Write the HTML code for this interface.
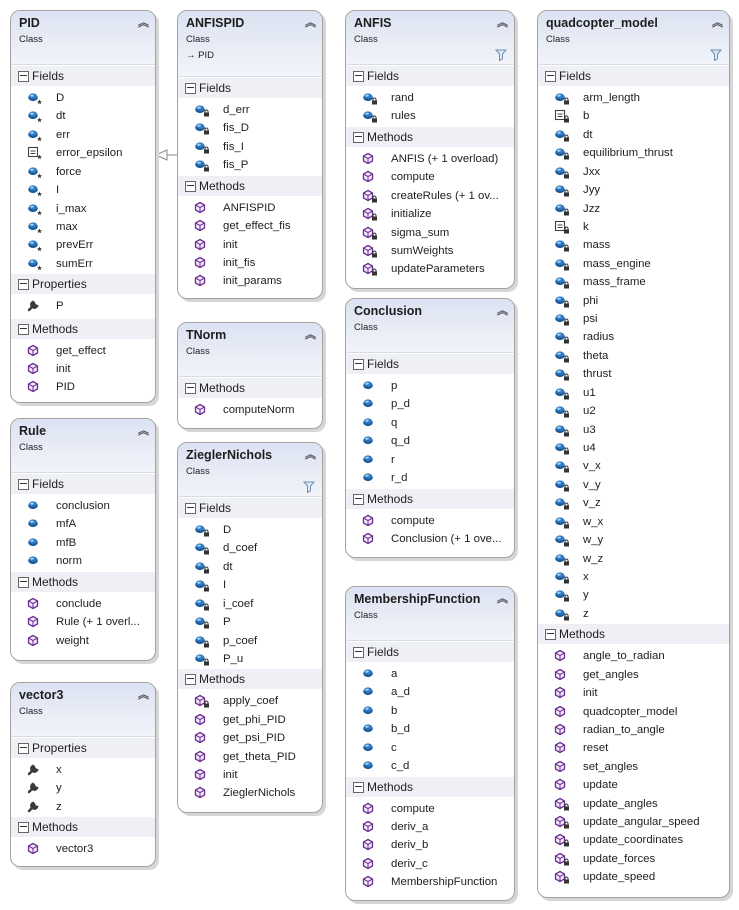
<!DOCTYPE html>
<html><head><meta charset="utf-8">
<style>
*{margin:0;padding:0;box-sizing:border-box}
body{width:739px;height:910px;background:#fff;position:relative;overflow:hidden;font-family:"Liberation Sans",sans-serif;color:#1e1e1e}
.b{position:absolute;border:1px solid #a3a3a3;border-radius:10px;background:#fff;box-shadow:3px 3px 0 #d6d6d6;overflow:hidden}
.h{height:54px;background:linear-gradient(#dbe2f1,#f2f4fa);border-bottom:1px solid #d8dce6;position:relative}
.h.t{height:66px}
.h b{position:absolute;left:8px;top:5px;font-size:12.5px}
.h s{position:absolute;left:8px;top:23px;font-size:9.5px;text-decoration:none}
.h u{position:absolute;left:8px;top:39px;font-size:9.5px;text-decoration:none}
.h .ch{position:absolute;right:8px;top:3px;font-size:11px;color:#555;font-weight:bold;letter-spacing:-2px}
.h .fi{position:absolute;right:7px;top:38px}
.sh{margin-top:1px;height:20px;background:#eef0f5;font-size:12px;line-height:20px;padding-left:21px;position:relative;margin-bottom:3px}
.sh:before{content:"";position:absolute;left:7px;top:5px;width:9px;height:9px;border:1px solid #666;background:#fff}
.sh:after{content:"";position:absolute;left:9px;top:9px;width:7px;height:1px;background:#333}
.r{height:18.43px;line-height:18.43px;font-size:11.4px;padding-left:45px;position:relative;white-space:nowrap}
.r svg{position:absolute;left:16px;top:2px;width:17px;height:15px}
</style></head><body>
<svg width="0" height="0" style="position:absolute">
<defs>
<g id="f"><ellipse cx="6" cy="6.5" rx="4.8" ry="3.6" fill="#1d5c98"/><ellipse cx="6" cy="5" rx="4" ry="2.6" fill="#2f7cc4"/><ellipse cx="5" cy="4.6" rx="1.8" ry="1" fill="#a9d2f2"/></g>
<g id="m"><polygon points="6,1.5 10.5,4 10.5,9 6,11.5 1.5,9 1.5,4" fill="#f4ecfa" stroke="#6b2c91" stroke-width="1.3"/><path d="M1.8,4.2 6,6.5 10.2,4.2 M6,6.5 V11" stroke="#6b2c91" stroke-width="1" fill="none"/></g>
<g id="c"><rect x="1.5" y="1.5" width="9" height="9" fill="#fff" stroke="#444" stroke-width="1.1"/><path d="M3.5,5 H8.5 M3.5,7.5 H8.5" stroke="#444" stroke-width="1.1"/></g>
<g id="l"><rect x="10" y="9.5" width="5" height="4" fill="#333"/><path d="M11,9.8 V8.5 a1.5,1.5 0 0 1 3,0 V9.8" stroke="#333" fill="none" stroke-width="1"/></g>
<g id="s"><path d="M12.5,8.5 13.2,10.3 15,10.3 13.6,11.4 14.1,13.2 12.5,12.1 10.9,13.2 11.4,11.4 10,10.3 11.8,10.3Z" fill="#333"/></g>
<g id="p"><path d="M2,11 L7,6 M6,3 a3,3 0 1 0 4,4 l-1.5,-0.5 -1,-1 -0.5,-1.5Z" stroke="#3a3a3a" stroke-width="2.4" fill="#3a3a3a" stroke-linecap="round"/></g>
<g id="fl"><path d="M1,1 H11 L7.5,5 V10 L4.5,11.5 V5Z" fill="#dfe8f3" stroke="#6f8fb0" stroke-width="1"/></g>
</defs></svg>

<!-- inheritance arrow -->
<svg style="position:absolute;left:150px;top:145px" width="30" height="20"><path d="M5,10 H27" stroke="#888" stroke-width="1"/><polygon points="6,10 17,5 17,15" fill="#fff" stroke="#888"/></svg>

<!-- PID -->
<div class="b" style="left:10px;top:10px;width:146px;height:393px">
<div class="h"><b>PID</b><s>Class</s><span class="ch">︽</span></div>
<div class="sh">Fields</div>
<div class="r"><svg><use href="#f"/><use href="#s"/></svg>D</div>
<div class="r"><svg><use href="#f"/><use href="#s"/></svg>dt</div>
<div class="r"><svg><use href="#f"/><use href="#s"/></svg>err</div>
<div class="r"><svg><use href="#c"/><use href="#s"/></svg>error_epsilon</div>
<div class="r"><svg><use href="#f"/><use href="#s"/></svg>force</div>
<div class="r"><svg><use href="#f"/><use href="#s"/></svg>I</div>
<div class="r"><svg><use href="#f"/><use href="#s"/></svg>i_max</div>
<div class="r"><svg><use href="#f"/><use href="#s"/></svg>max</div>
<div class="r"><svg><use href="#f"/><use href="#s"/></svg>prevErr</div>
<div class="r"><svg><use href="#f"/><use href="#s"/></svg>sumErr</div>
<div class="sh">Properties</div>
<div class="r"><svg><use href="#p"/></svg>P</div>
<div class="sh" style="margin-top:3px">Methods</div>
<div class="r"><svg><use href="#m"/></svg>get_effect</div>
<div class="r"><svg><use href="#m"/></svg>init</div>
<div class="r"><svg><use href="#m"/></svg>PID</div>
</div>

<!-- Rule -->
<div class="b" style="left:10px;top:418px;width:146px;height:243px">
<div class="h"><b>Rule</b><s>Class</s><span class="ch">︽</span></div>
<div class="sh">Fields</div>
<div class="r"><svg><use href="#f"/></svg>conclusion</div>
<div class="r"><svg><use href="#f"/></svg>mfA</div>
<div class="r"><svg><use href="#f"/></svg>mfB</div>
<div class="r"><svg><use href="#f"/></svg>norm</div>
<div class="sh">Methods</div>
<div class="r"><svg><use href="#m"/></svg>conclude</div>
<div class="r"><svg><use href="#m"/></svg>Rule (+ 1 overl...</div>
<div class="r"><svg><use href="#m"/></svg>weight</div>
</div>

<!-- vector3 -->
<div class="b" style="left:10px;top:682px;width:146px;height:185px">
<div class="h"><b>vector3</b><s>Class</s><span class="ch">︽</span></div>
<div class="sh">Properties</div>
<div class="r"><svg><use href="#p"/></svg>x</div>
<div class="r"><svg><use href="#p"/></svg>y</div>
<div class="r"><svg><use href="#p"/></svg>z</div>
<div class="sh">Methods</div>
<div class="r"><svg><use href="#m"/></svg>vector3</div>
</div>

<!-- ANFISPID -->
<div class="b" style="left:177px;top:10px;width:146px;height:289px">
<div class="h t"><b>ANFISPID</b><s>Class</s><u>→ PID</u><span class="ch">︽</span></div>
<div class="sh">Fields</div>
<div class="r"><svg><use href="#f"/><use href="#l"/></svg>d_err</div>
<div class="r"><svg><use href="#f"/><use href="#l"/></svg>fis_D</div>
<div class="r"><svg><use href="#f"/><use href="#l"/></svg>fis_I</div>
<div class="r"><svg><use href="#f"/><use href="#l"/></svg>fis_P</div>
<div class="sh">Methods</div>
<div class="r"><svg><use href="#m"/></svg>ANFISPID</div>
<div class="r"><svg><use href="#m"/></svg>get_effect_fis</div>
<div class="r"><svg><use href="#m"/></svg>init</div>
<div class="r"><svg><use href="#m"/></svg>init_fis</div>
<div class="r"><svg><use href="#m"/></svg>init_params</div>
</div>

<!-- TNorm -->
<div class="b" style="left:177px;top:322px;width:146px;height:107px">
<div class="h"><b>TNorm</b><s>Class</s><span class="ch">︽</span></div>
<div class="sh">Methods</div>
<div class="r"><svg><use href="#m"/></svg>computeNorm</div>
</div>

<!-- ZieglerNichols -->
<div class="b" style="left:177px;top:442px;width:146px;height:371px">
<div class="h"><b>ZieglerNichols</b><s>Class</s><span class="ch">︽</span><svg class="fi" width="12" height="12"><use href="#fl"/></svg></div>
<div class="sh">Fields</div>
<div class="r"><svg><use href="#f"/><use href="#l"/></svg>D</div>
<div class="r"><svg><use href="#f"/><use href="#l"/></svg>d_coef</div>
<div class="r"><svg><use href="#f"/><use href="#l"/></svg>dt</div>
<div class="r"><svg><use href="#f"/><use href="#l"/></svg>I</div>
<div class="r"><svg><use href="#f"/><use href="#l"/></svg>i_coef</div>
<div class="r"><svg><use href="#f"/><use href="#l"/></svg>P</div>
<div class="r"><svg><use href="#f"/><use href="#l"/></svg>p_coef</div>
<div class="r"><svg><use href="#f"/><use href="#l"/></svg>P_u</div>
<div class="sh">Methods</div>
<div class="r"><svg><use href="#m"/><use href="#l"/></svg>apply_coef</div>
<div class="r"><svg><use href="#m"/></svg>get_phi_PID</div>
<div class="r"><svg><use href="#m"/></svg>get_psi_PID</div>
<div class="r"><svg><use href="#m"/></svg>get_theta_PID</div>
<div class="r"><svg><use href="#m"/></svg>init</div>
<div class="r"><svg><use href="#m"/></svg>ZieglerNichols</div>
</div>

<!-- ANFIS -->
<div class="b" style="left:345px;top:10px;width:170px;height:279px">
<div class="h"><b>ANFIS</b><s>Class</s><span class="ch">︽</span><svg class="fi" width="12" height="12"><use href="#fl"/></svg></div>
<div class="sh">Fields</div>
<div class="r"><svg><use href="#f"/><use href="#l"/></svg>rand</div>
<div class="r"><svg><use href="#f"/><use href="#l"/></svg>rules</div>
<div class="sh">Methods</div>
<div class="r"><svg><use href="#m"/></svg>ANFIS (+ 1 overload)</div>
<div class="r"><svg><use href="#m"/></svg>compute</div>
<div class="r"><svg><use href="#m"/><use href="#l"/></svg>createRules (+ 1 ov...</div>
<div class="r"><svg><use href="#m"/><use href="#l"/></svg>initialize</div>
<div class="r"><svg><use href="#m"/><use href="#l"/></svg>sigma_sum</div>
<div class="r"><svg><use href="#m"/><use href="#l"/></svg>sumWeights</div>
<div class="r"><svg><use href="#m"/><use href="#l"/></svg>updateParameters</div>
</div>

<!-- Conclusion -->
<div class="b" style="left:345px;top:298px;width:170px;height:260px">
<div class="h"><b>Conclusion</b><s>Class</s><span class="ch">︽</span></div>
<div class="sh">Fields</div>
<div class="r"><svg><use href="#f"/></svg>p</div>
<div class="r"><svg><use href="#f"/></svg>p_d</div>
<div class="r"><svg><use href="#f"/></svg>q</div>
<div class="r"><svg><use href="#f"/></svg>q_d</div>
<div class="r"><svg><use href="#f"/></svg>r</div>
<div class="r"><svg><use href="#f"/></svg>r_d</div>
<div class="sh">Methods</div>
<div class="r"><svg><use href="#m"/></svg>compute</div>
<div class="r"><svg><use href="#m"/></svg>Conclusion (+ 1 ove...</div>
</div>

<!-- MembershipFunction -->
<div class="b" style="left:345px;top:586px;width:170px;height:315px">
<div class="h"><b>MembershipFunction</b><s>Class</s><span class="ch">︽</span></div>
<div class="sh">Fields</div>
<div class="r"><svg><use href="#f"/></svg>a</div>
<div class="r"><svg><use href="#f"/></svg>a_d</div>
<div class="r"><svg><use href="#f"/></svg>b</div>
<div class="r"><svg><use href="#f"/></svg>b_d</div>
<div class="r"><svg><use href="#f"/></svg>c</div>
<div class="r"><svg><use href="#f"/></svg>c_d</div>
<div class="sh">Methods</div>
<div class="r"><svg><use href="#m"/></svg>compute</div>
<div class="r"><svg><use href="#m"/></svg>deriv_a</div>
<div class="r"><svg><use href="#m"/></svg>deriv_b</div>
<div class="r"><svg><use href="#m"/></svg>deriv_c</div>
<div class="r"><svg><use href="#m"/></svg>MembershipFunction</div>
</div>

<!-- quadcopter_model -->
<div class="b" style="left:537px;top:10px;width:193px;height:888px">
<div class="h"><b>quadcopter_model</b><s>Class</s><span class="ch">︽</span><svg class="fi" width="12" height="12"><use href="#fl"/></svg></div>
<div class="sh">Fields</div>
<div class="r"><svg><use href="#f"/><use href="#l"/></svg>arm_length</div>
<div class="r"><svg><use href="#c"/><use href="#l"/></svg>b</div>
<div class="r"><svg><use href="#f"/><use href="#l"/></svg>dt</div>
<div class="r"><svg><use href="#f"/><use href="#l"/></svg>equilibrium_thrust</div>
<div class="r"><svg><use href="#f"/><use href="#l"/></svg>Jxx</div>
<div class="r"><svg><use href="#f"/><use href="#l"/></svg>Jyy</div>
<div class="r"><svg><use href="#f"/><use href="#l"/></svg>Jzz</div>
<div class="r"><svg><use href="#c"/><use href="#l"/></svg>k</div>
<div class="r"><svg><use href="#f"/><use href="#l"/></svg>mass</div>
<div class="r"><svg><use href="#f"/><use href="#l"/></svg>mass_engine</div>
<div class="r"><svg><use href="#f"/><use href="#l"/></svg>mass_frame</div>
<div class="r"><svg><use href="#f"/><use href="#l"/></svg>phi</div>
<div class="r"><svg><use href="#f"/><use href="#l"/></svg>psi</div>
<div class="r"><svg><use href="#f"/><use href="#l"/></svg>radius</div>
<div class="r"><svg><use href="#f"/><use href="#l"/></svg>theta</div>
<div class="r"><svg><use href="#f"/><use href="#l"/></svg>thrust</div>
<div class="r"><svg><use href="#f"/><use href="#l"/></svg>u1</div>
<div class="r"><svg><use href="#f"/><use href="#l"/></svg>u2</div>
<div class="r"><svg><use href="#f"/><use href="#l"/></svg>u3</div>
<div class="r"><svg><use href="#f"/><use href="#l"/></svg>u4</div>
<div class="r"><svg><use href="#f"/><use href="#l"/></svg>v_x</div>
<div class="r"><svg><use href="#f"/><use href="#l"/></svg>v_y</div>
<div class="r"><svg><use href="#f"/><use href="#l"/></svg>v_z</div>
<div class="r"><svg><use href="#f"/><use href="#l"/></svg>w_x</div>
<div class="r"><svg><use href="#f"/><use href="#l"/></svg>w_y</div>
<div class="r"><svg><use href="#f"/><use href="#l"/></svg>w_z</div>
<div class="r"><svg><use href="#f"/><use href="#l"/></svg>x</div>
<div class="r"><svg><use href="#f"/><use href="#l"/></svg>y</div>
<div class="r"><svg><use href="#f"/><use href="#l"/></svg>z</div>
<div class="sh">Methods</div>
<div class="r"><svg><use href="#m"/></svg>angle_to_radian</div>
<div class="r"><svg><use href="#m"/></svg>get_angles</div>
<div class="r"><svg><use href="#m"/></svg>init</div>
<div class="r"><svg><use href="#m"/></svg>quadcopter_model</div>
<div class="r"><svg><use href="#m"/></svg>radian_to_angle</div>
<div class="r"><svg><use href="#m"/></svg>reset</div>
<div class="r"><svg><use href="#m"/></svg>set_angles</div>
<div class="r"><svg><use href="#m"/></svg>update</div>
<div class="r"><svg><use href="#m"/><use href="#l"/></svg>update_angles</div>
<div class="r"><svg><use href="#m"/><use href="#l"/></svg>update_angular_speed</div>
<div class="r"><svg><use href="#m"/><use href="#l"/></svg>update_coordinates</div>
<div class="r"><svg><use href="#m"/><use href="#l"/></svg>update_forces</div>
<div class="r"><svg><use href="#m"/><use href="#l"/></svg>update_speed</div>
</div>
</body></html>
